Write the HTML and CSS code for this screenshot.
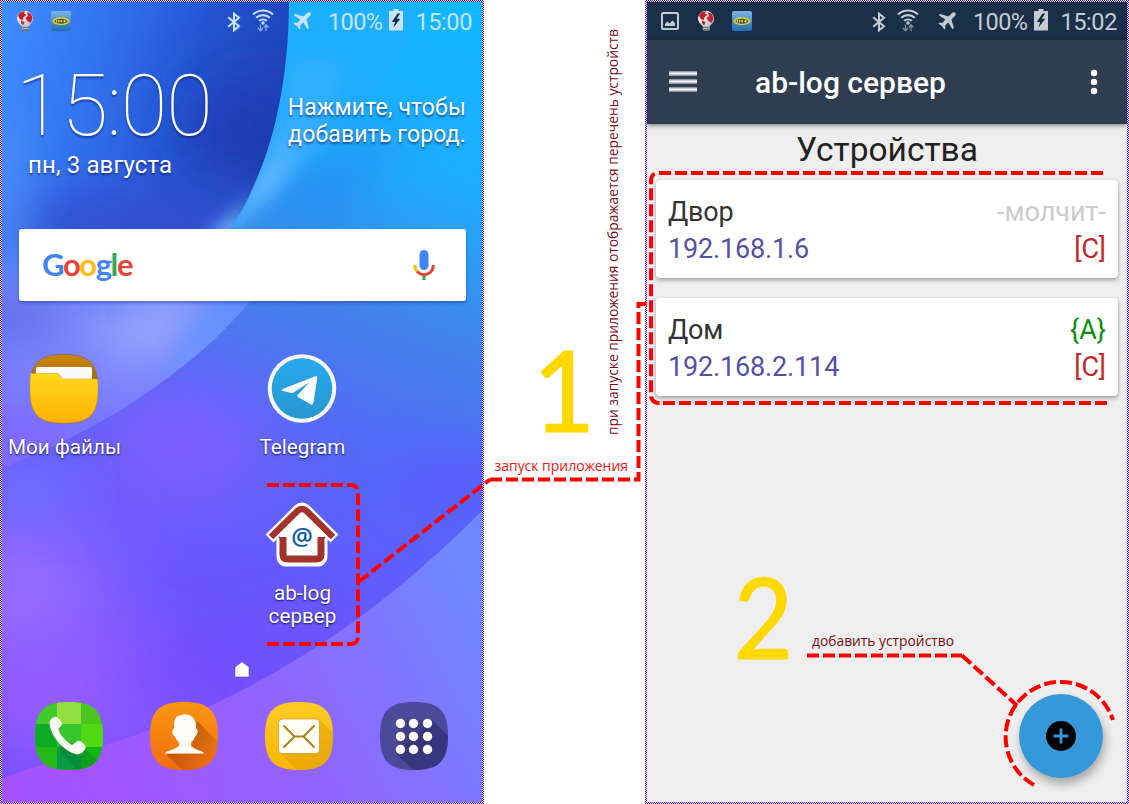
FILE: index.html
```html
<!DOCTYPE html>
<html lang="ru">
<head>
<meta charset="utf-8">
<title>ab-log сервер</title>
<link rel="stylesheet" href="styles.css">
</head>
<body>
<svg class="defs" width="0" height="0" aria-hidden="true">
  <defs>
    <pattern id="checker" width="2" height="2" patternUnits="userSpaceOnUse"><rect width="2" height="2" fill="#fff"/><path d="M0 0H1V1H0zM1 1H2V2H1z" fill="#4400f0"/></pattern>
    <pattern id="checkerOdd" width="2" height="2" patternUnits="userSpaceOnUse"><rect width="2" height="2" fill="#fff"/><path d="M1 0H2V1H1zM0 1H1V2H0z" fill="#4400f0"/></pattern>
    <linearGradient id="gBulb" x1="0" y1="0" x2="1" y2="1"><stop offset="0" stop-color="#fff"/><stop offset="1" stop-color="#b9b9c2"/></linearGradient>
    <linearGradient id="gIm" x1="0" y1="0" x2="0" y2="1"><stop offset="0" stop-color="#7db5e2"/><stop offset="1" stop-color="#1f6eb3"/></linearGradient>
    <symbol id="bulb" viewBox="0 0 18 22">
      <rect x="5.5" y="14" width="7.5" height="7" rx="1.5" fill="#70757c"/>
      <path d="M6 16.500h6.500M6 18.500h6.500" stroke="#c9ccd0" stroke-width=".8"/>
      <path d="M9 .8a8 8 0 0 1 8 8c0 3.500-2.500 5.200-4 7.200H5.500C4 14 1 12.300 1 8.800a8 8 0 0 1 8-8z" fill="url(#gBulb)"/>
      <path d="M2 5.500C3.500 2 7 1 9 1.300l-1 2.500 2.500 1-3 2.500-1 3-3-1.500zM11 2l4 2 1.500 4.500-2 4.500-3-2-2-3 2.500-2zM5 10.500l3.500 1.500-1.500 3.500L5 13z" fill="#c41f2b"/>
    </symbol>
    <symbol id="implus" viewBox="0 0 20 20">
      <rect width="20" height="20" rx="2" fill="url(#gIm)"/>
      <ellipse cx="10" cy="10.200" rx="8.300" ry="3.900" fill="#e0d534"/>
      <ellipse cx="10" cy="10.200" rx="6.300" ry="2.500" fill="#4a4c33"/>
      <path d="M5.500 9v2.500M7.500 11.500V9l1.500 1.500L10.500 9v2.500M12 10.200h3M13.500 8.800v2.800" stroke="#f2e75a" stroke-width=".9" fill="none"/>
    </symbol>
    <symbol id="bt" viewBox="0 0 14 20">
      <path d="M1.200 5.200L12 14.200 7 18.300V1.700L12 5.800 1.200 14.800" fill="none" stroke="currentColor" stroke-width="2"/>
    </symbol>
    <symbol id="wifi" viewBox="0 0 22 24">
      <g fill="none" stroke="currentColor" stroke-width="2.100"><path d="M1 6.500a14.500 14.500 0 0 1 20 0"/><path d="M4.200 9.800a10 10 0 0 1 13.600 0"/><path d="M7.300 12.900a5.500 5.500 0 0 1 7.400 0"/></g>
      <circle cx="11" cy="15" r="1.700" fill="currentColor"/>
      <path d="M8.500 16.500v6M6 20l2.500 2.800L11 20M14 23v-6M11.800 19.500L14 16.800l2.500 2.700" fill="none" stroke="currentColor" stroke-width="1.300" opacity=".6"/>
    </symbol>
    <symbol id="plane" viewBox="0 0 18 18">
      <path d="M17.300.7c-1.200-1.200-2.700-.2-3.500.5L10.500 4.500 2.200 1.900.8 3.300l6.500 4.300-3 3.300-2.600-.4L.5 11.700l3.500 2.200 2.300 3.600 1.200-1.200-.4-2.700 3.200-3 4.200 6.600 1.400-1.400-2.500-8.300 3.200-3.200c.9-.9 1.600-2.400.7-3.600z" fill="currentColor"/>
    </symbol>
    <symbol id="battery" viewBox="0 0 14 22">
      <path d="M4.500 0h5v2H14v19.500H0V2h4.500z" fill="currentColor"/>
      <path d="M8.500 4.500L2.800 13H6.200L4.300 18.800 11.300 9.800H7.700L11.200 4.500z" fill="#123043"/>
    </symbol>
  </defs>
</svg>

<main class="guide">
  <section class="phone">
    <svg class="frame" width="484" height="804" shape-rendering="crispEdges"><rect width="484" height="804" fill="url(#checker)"/></svg>
    <div class="screen home">
      <svg class="wallpaper" viewBox="2 2 480 800">
        <defs>
          <filter id="b20" x="-100%" y="-100%" width="300%" height="300%"><feGaussianBlur stdDeviation="24"/></filter>
          <filter id="b40" x="-120%" y="-120%" width="340%" height="340%"><feGaussianBlur stdDeviation="45"/></filter>
          <filter id="b8" x="-50%" y="-50%" width="200%" height="200%"><feGaussianBlur stdDeviation="9"/></filter>
          <linearGradient id="base" gradientUnits="userSpaceOnUse" x1="440" y1="0" x2="180" y2="700">
            <stop offset="0" stop-color="#10b8ff"/><stop offset=".24" stop-color="#20aafc"/><stop offset=".42" stop-color="#4283ea"/><stop offset=".62" stop-color="#5468f8"/><stop offset=".8" stop-color="#6559fd"/><stop offset="1" stop-color="#754dff"/>
          </linearGradient>
          <linearGradient id="dark" gradientUnits="userSpaceOnUse" x1="0" y1="60" x2="285" y2="130">
            <stop offset="0" stop-color="#3d8bfd"/><stop offset=".3" stop-color="#3374ef"/><stop offset=".65" stop-color="#2657d3"/><stop offset="1" stop-color="#2045b8"/>
          </linearGradient>
          <linearGradient id="low" gradientUnits="userSpaceOnUse" x1="80" y1="800" x2="470" y2="590">
            <stop offset="0" stop-color="#a553ff"/><stop offset=".45" stop-color="#9362ff"/><stop offset=".8" stop-color="#7d78ff"/><stop offset="1" stop-color="#6f88ff"/>
          </linearGradient>
          <linearGradient id="leftg" gradientUnits="userSpaceOnUse" x1="120" y1="250" x2="60" y2="470">
            <stop offset="0" stop-color="#4d83f8"/><stop offset=".35" stop-color="#7f8dfb"/><stop offset=".7" stop-color="#7b7aff"/><stop offset="1" stop-color="#7a70ff"/>
          </linearGradient>
          <linearGradient id="streak" gradientUnits="userSpaceOnUse" x1="262" y1="178" x2="300" y2="130">
            <stop offset="0" stop-color="#6dbcff" stop-opacity=".95"/><stop offset="1" stop-color="#4db4ff" stop-opacity=".35"/>
          </linearGradient>
          <linearGradient id="fade" x1="0" y1="0" x2="0" y2="1"><stop offset=".76" stop-color="#fff"/><stop offset=".97" stop-color="#000"/></linearGradient>
          <mask id="mFade" maskUnits="userSpaceOnUse" x="0" y="0" width="300" height="300"><rect width="300" height="300" fill="url(#fade)"/></mask>
          <clipPath id="cDark"><path d="M0 0H289C289 75 275 140 254 185Q243 212 229 230L200 300H0z"/></clipPath>
          <clipPath id="cLeft"><path d="M0 225H225L229 240H290C270 280 235 328 170 376Q100 430 0 469z"/></clipPath>
        </defs>
        <rect width="484" height="804" fill="url(#base)"/>
        <ellipse cx="180" cy="445" rx="90" ry="50" fill="#8b5dfa" filter="url(#b40)"/>
        <ellipse cx="10" cy="590" rx="100" ry="70" fill="#9a72ff" filter="url(#b40)"/>
        <ellipse cx="60" cy="700" rx="110" ry="50" fill="#9d60ff" filter="url(#b40)"/>
        <ellipse cx="25" cy="490" rx="50" ry="25" fill="#7072ff" filter="url(#b20)"/>
        <ellipse cx="210" cy="650" rx="110" ry="10" fill="#6f4dff" filter="url(#b20)" transform="rotate(-28 210 650)"/>
        <ellipse cx="460" cy="480" rx="65" ry="30" fill="#5f56ff" filter="url(#b20)" opacity=".7"/>
        <path d="M340 150L270 225 320 235 400 130z" fill="#2484ec" opacity=".7" filter="url(#b20)"/>
        <path d="M292 0H429C400 65 340 140 235 232H226C270 145 292 80 292 0z" fill="#2ba7ff" opacity=".35"/>
        <path d="M289 60C286 110 270 165 229 230H233L320 142 345 60z" fill="url(#streak)" filter="url(#b8)"/>
        <g clip-path="url(#cLeft)">
          <rect y="220" width="320" height="260" fill="url(#leftg)"/>
          <ellipse cx="158" cy="322" rx="60" ry="22" fill="#a3abff" filter="url(#b20)" transform="rotate(-28 158 322)"/>
          <ellipse cx="0" cy="315" rx="70" ry="22" fill="#5a66e6" filter="url(#b20)"/>
          <path d="M195 318L250 290 245 325 150 385z" fill="#6194ff" filter="url(#b8)" opacity=".7"/>
          <ellipse cx="20" cy="440" rx="60" ry="12" fill="#845aff" filter="url(#b20)"/>
          <path d="M180 240L235 220 275 170 300 240z" fill="#79c6ff" filter="url(#b8)"/>
        </g>
        <g clip-path="url(#cDark)"><g mask="url(#mFade)">
          <rect width="300" height="300" fill="url(#dark)"/>
          <ellipse cx="262" cy="120" rx="55" ry="45" fill="#1f38b0" filter="url(#b40)"/>
          <ellipse cx="235" cy="135" rx="45" ry="35" fill="#2038ae" filter="url(#b20)" opacity=".6"/>
          <ellipse cx="140" cy="225" rx="130" ry="38" fill="#3350d2" filter="url(#b20)"/>
          <ellipse cx="0" cy="190" rx="22" ry="80" fill="#518bf8" filter="url(#b20)"/>
          <path d="M205 238Q238 218 253 187L234 245z" fill="#78c7ff" filter="url(#b8)"/>
        </g></g>
        <path d="M0 779C60 757 140 738 210 706C325 652 408 585 484 509V804H0z" fill="url(#low)"/>
      </svg>

      <header class="status">
        <svg width="18" height="22"><use href="#bulb"/></svg>
        <svg class="s-im" width="20" height="20"><use href="#implus"/></svg>
        <div class="status-right">
          <svg width="14" height="20"><use href="#bt"/></svg>
          <svg class="s-wifi" width="22" height="24"><use href="#wifi"/></svg>
          <svg class="s-plane" width="18" height="18"><use href="#plane"/></svg>
          <span class="s-pct">100%</span>
          <svg class="s-bat" width="14" height="22"><use href="#battery"/></svg>
          <span class="s-time">15:00</span>
        </div>
      </header>

      <div class="widgets">
        <div class="clock">
          <div class="clock-time">15:00</div>
          <div class="clock-date">пн, 3 августа</div>
        </div>
        <p class="weather">Нажмите, чтобы<br>добавить город.</p>
      </div>

      <div class="search">
        <span class="google"><b class="gb">G</b><b class="gr">o</b><b class="gy">o</b><b class="gb">g</b><b class="gg">l</b><b class="gr">e</b></span>
        <svg width="24" height="32" viewBox="0 0 24 32">
          <rect x="7.500" y="1" width="9" height="20" rx="4.500" fill="#4285f4"/>
          <path d="M2.700 16Q2.700 20 5.400 22.700" fill="none" stroke="#fbbc05" stroke-width="3"/>
          <path d="M5.200 22.600A9.300 9.300 0 0 0 21.300 16" fill="none" stroke="#ea4335" stroke-width="3"/>
          <path d="M12 26.500V31" stroke="#34a853" stroke-width="3.200"/>
        </svg>
      </div>

      <div class="apps">
        <div class="app c1">
          <svg width="70" height="72" viewBox="0 0 70 72">
            <defs><linearGradient id="fy" x1="0" y1="0" x2="0" y2="1"><stop offset="0" stop-color="#ffd91c"/><stop offset="1" stop-color="#ffb003"/></linearGradient>
            <linearGradient id="fb" x1="0" y1="0" x2="0" y2="1"><stop offset="0" stop-color="#cf8a00"/><stop offset=".35" stop-color="#a86b00"/></linearGradient></defs>
            <path d="M35 1.500C60 1.500 69 10 69 36S60 70.500 35 70.500 1 62 1 36 10 1.500 35 1.500z" fill="url(#fb)" stroke="#7a6890" stroke-width=".8"/>
            <rect x="7" y="14" width="56" height="22" rx="2" fill="#fafafa"/>
            <path d="M1.600 20.500H28Q30 20.500 31 22.500L32.500 25Q33 26 35 26H68.600Q69 30 69 36C69 62 60 70 35 70S1 62 1 36Q1 27 1.600 20.500z" fill="url(#fy)" stroke="#cf9a2b" stroke-width=".5"/>
          </svg>
          <span>Мои файлы</span>
        </div>
        <div class="app c3">
          <svg width="70" height="72" viewBox="0 0 70 72">
            <defs><linearGradient id="tg" x1="0" y1="0" x2="0" y2="1"><stop offset="0" stop-color="#28a9ec"/><stop offset="1" stop-color="#2798d0"/></linearGradient></defs>
            <circle cx="35" cy="35.500" r="34.300" fill="#f8f9fd"/>
            <circle cx="35" cy="35.500" r="30.300" fill="url(#tg)"/>
            <path d="M49 23.100c.9-.4 1.500.2 1.400 1.200L46.500 49.500c-.3 2-1.400 2.700-3 1.800L31 44c-1-.6-.9-1.500-.2-2.200L42.500 29.200 26.500 39.500c-.8.500-1.500.6-2.400.4L16 38c-1.600-.5-1.500-1.500.2-2.300z" fill="#fafbfe"/>
          </svg>
          <span>Telegram</span>
        </div>
        <div class="app c3">
          <svg width="74" height="72" viewBox="0 0 74 72">
            <path d="M4.500 39.500L33 11Q37 7.500 41 11L69.500 39.500M17 39V57Q17 62 22 62H52Q57 62 57 57V39" fill="none" stroke="#fff" stroke-width="11"/>
            <path d="M15 36L37 12 59 36V62H15z" fill="#fff"/>
            <path d="M6 38L33 11.500Q37 8.500 41 11.500L68 38" fill="none" stroke="#a2332b" stroke-width="6.500"/>
            <path d="M18 38V55.500Q18 60 23 60H51Q56 60 56 55.500V38" fill="none" stroke="#a2332b" stroke-width="7"/>
            <text x="37" y="46" class="at">@</text>
          </svg>
          <span>ab-log<br>сервер</span>
        </div>
      </div>

      <svg class="pager" width="16" height="17" viewBox="0 0 16 17"><path d="M1 6L8 .8 15 6V16H1z" fill="#fff" stroke="#4a3d92" stroke-opacity=".5"/></svg>

      <nav class="dock">
        <svg viewBox="0 0 70 70">
          <defs>
            <clipPath id="sq"><path d="M35 1C60 1 69 10 69 35S60 69 35 69 1 60 1 35 10 1 35 1z"/></clipPath>
          </defs>
          <g clip-path="url(#sq)">
            <rect width="70" height="70" fill="#2dbb3c"/>
            <rect width="23" height="23" fill="#43c92b"/><rect x="23" width="24" height="23" fill="#91df3f"/><rect x="47" width="23" height="23" fill="#4cc51e"/>
            <rect y="23" width="23" height="23" fill="#0dab24"/><rect x="23" y="23" width="24" height="23" fill="#37c52e"/><rect x="47" y="23" width="23" height="23" fill="#52d912"/>
            <rect y="46" width="23" height="24" fill="#25ba1a"/><rect x="23" y="46" width="24" height="24" fill="#079b43"/><rect x="47" y="46" width="23" height="24" fill="#13b610"/>
            <path d="M22 35L50 47 70 66V70H44L28 54z" fill="#06722f" opacity=".35"/>
          </g>
          <path d="M22 15.500L26 19Q29 23 27 25L24.500 27.500C25 34 33 41 38 44L43.500 40Q45 39.500 47 40.500L51 44Q52 47 51 48.500 48 53 43.500 53.500C30 51 15 34 15.500 20.500Q17 16.500 22 15.500z" fill="#fbfbf6"/>
        </svg>
        <svg viewBox="0 0 70 70">
          <defs><linearGradient id="og" x1="0" y1="0" x2="0" y2="1"><stop offset="0" stop-color="#fa9711"/><stop offset="1" stop-color="#f26b12"/></linearGradient>
          <linearGradient id="sh" gradientUnits="userSpaceOnUse" x1="35" y1="35" x2="60" y2="60"><stop offset="0" stop-color="#8a3500" stop-opacity=".5"/><stop offset="1" stop-color="#8a3500" stop-opacity=".08"/></linearGradient></defs>
          <g clip-path="url(#sq)"><rect width="70" height="70" fill="url(#og)"/><path d="M48 20L70 42V70H34L17 53H55L43 45z" fill="url(#sh)"/></g>
          <path d="M35 13Q47 14 47 26V28Q49 27 48.500 31.500 48 34 46.500 35 45 39 42 41.500V45Q45 48 50 49.500 54.500 50.500 55 52.500H16Q16.500 50.500 21 49.500 26 48 30 45V41.500Q27 39 25.500 35 23.500 34 23.300 31 23.300 27.500 25 28V26Q24.500 14 33 14z" fill="#fffdf9"/>
        </svg>
        <svg viewBox="0 0 70 70">
          <defs><linearGradient id="yg" x1="0" y1="0" x2="0" y2="1"><stop offset="0" stop-color="#ffcc25"/><stop offset="1" stop-color="#fbb500"/></linearGradient></defs>
          <g clip-path="url(#sq)"><rect width="70" height="70" fill="url(#yg)"/><path d="M55 18L70 33V70H34L15 51z" fill="#cb8e00" opacity=".35"/></g>
          <rect x="14.500" y="18" width="41" height="34.500" rx="3.500" fill="#fffff6" stroke="#b98c12" stroke-width=".6"/>
          <path d="M19.500 24.500L30.500 35.500H39.500L50.500 24.500M19.500 46.500L30.500 35.500M39.500 35.500L50.500 46.500" fill="none" stroke="#a98313" stroke-width="2"/>
        </svg>
        <svg viewBox="0 0 70 70">
          <g clip-path="url(#sq)"><rect width="70" height="70" fill="#4a4a99"/><path d="M53 19L70 36V70H36L17 53z" fill="#1c1c57" opacity=".4"/><path d="M20 19H53V53H20z" fill="#33336f" opacity=".45"/></g>
          <g fill="#fff"><circle cx="21.500" cy="22.500" r="4.700"/><circle cx="34.500" cy="22.500" r="4.700"/><circle cx="48.500" cy="22.500" r="4.700"/><circle cx="21.500" cy="35.500" r="4.700"/><circle cx="34.500" cy="35.500" r="4.700"/><circle cx="48.500" cy="35.500" r="4.700"/><circle cx="21.500" cy="48.500" r="4.700"/><circle cx="34.500" cy="48.500" r="4.700"/><circle cx="48.500" cy="48.500" r="4.700"/></g>
        </svg>
      </nav>
    </div>
  </section>

  <section class="phone">
    <svg class="frame" width="484" height="804" shape-rendering="crispEdges"><rect width="484" height="804" fill="url(#checkerOdd)"/></svg>
    <div class="screen server">
      <header class="status status-dark">
        <svg class="s-img" width="18" height="18" viewBox="0 0 18 18"><rect x="1" y="1" width="16" height="16" rx="1" fill="none" stroke="currentColor" stroke-width="2"/><path d="M4 14V12L6.500 9.500 8.500 11.500 11.500 8.500 14 11V14z" fill="currentColor"/></svg>
        <svg class="s-bulb2" width="18" height="22"><use href="#bulb"/></svg>
        <svg class="s-im2" width="20" height="20"><use href="#implus"/></svg>
        <div class="status-right">
          <svg width="14" height="20"><use href="#bt"/></svg>
          <svg class="s-wifi" width="22" height="24"><use href="#wifi"/></svg>
          <svg class="s-plane" width="18" height="18"><use href="#plane"/></svg>
          <span class="s-pct">100%</span>
          <svg class="s-bat" width="14" height="22"><use href="#battery"/></svg>
          <span class="s-time">15:02</span>
        </div>
      </header>
      <div class="appbar">
        <svg width="28" height="22" viewBox="0 0 28 22"><g fill="#8f98a3"><rect y="0" width="28" height="5"/><rect y="8" width="28" height="5"/><rect y="16" width="28" height="5"/></g><g fill="#fff"><rect y="1.500" width="28" height="2"/><rect y="9.500" width="28" height="2"/><rect y="17.500" width="28" height="2"/></g></svg>
        <h1>ab-log сервер</h1>
        <svg width="8" height="26" viewBox="0 0 8 26"><g fill="#fff"><circle cx="4" cy="4" r="3.200"/><circle cx="4" cy="13" r="3.200"/><circle cx="4" cy="22" r="3.200"/></g></svg>
      </div>
      <h2>Устройства</h2>
      <div class="cards">
        <article class="card">
          <div class="row"><span class="name">Двор</span><span class="silent">-молчит-</span></div>
          <div class="row"><span class="ip">192.168.1.6</span><span class="flag-c">[C]</span></div>
        </article>
        <article class="card">
          <div class="row"><span class="name">Дом</span><span class="flag-a">{A}</span></div>
          <div class="row"><span class="ip">192.168.2.114</span><span class="flag-c">[C]</span></div>
        </article>
      </div>
      <button class="fab" aria-label="+">
        <svg width="30" height="30" viewBox="0 0 30 30"><circle cx="15" cy="15" r="15" fill="#000"/><path d="M15 7.500V22.500M7.500 15H22.500" stroke="#3498db" stroke-width="2.800"/></svg>
      </button>
    </div>
  </section>

  <svg class="notes" viewBox="0 0 1129 804">
    <g class="dash">
      <path d="M267 485H350Q358 485 358 493V636Q358 644 350 644"/>
      <path d="M267 644H350"/>
      <path d="M359 581.500L490 479.500"/>
      <path d="M490 479.500H638.500V304H648"/>
      <path d="M1103 173H659Q651 173 651 181V395Q651 403 660 403"/>
      <path d="M1107 403H660"/>
      <path d="M807 655.500H962"/>
      <path d="M962 655.500L1017 705.500"/>
      <path d="M1034 785A55 55 0 1 1 1113 720"/>
    </g>
    <text class="num" transform="translate(532.500 432) scale(.97 1)">1</text>
    <text class="num" transform="translate(733.500 659) scale(.92 1)">2</text>
    <text class="note red" x="494.500" y="471" textLength="133.500" lengthAdjust="spacingAndGlyphs">запуск приложения</text>
    <text class="note" x="812" y="646" textLength="142" lengthAdjust="spacingAndGlyphs">добавить устройство</text>
    <text class="note" transform="translate(618 435) rotate(-90)" textLength="406" lengthAdjust="spacingAndGlyphs">при запуске приложения отображается перечень устройств</text>
  </svg>
</main>
</body>
</html>
```
FILE: styles.css
```css
* { box-sizing: border-box; }
body { margin: 0; background: #fff; font-family: Roboto, "Noto Sans", sans-serif; }
.defs { display: block; position: absolute; }
svg { display: block; flex: none; }

.guide { position: relative; display: flex; justify-content: space-between; width: 1129px; height: 804px; overflow: hidden; }
.phone { position: relative; width: 484px; height: 804px; padding: 2px; }
.frame { position: absolute; inset: 0; }
.screen { position: relative; width: 480px; height: 800px; overflow: hidden; display: flex; flex-direction: column; }
.wallpaper { position: absolute; inset: 0; width: 480px; height: 800px; }
.home > :not(.wallpaper) { position: relative; }

.status { display: flex; align-items: flex-start; height: 38px; padding: 8px 10px 0 14px; color: #c5e4fb; font-weight: 400; font-size: 23.500px; line-height: 28px; flex: none; }
.status-right { margin-left: auto; display: flex; align-items: flex-start; }
.status-right > svg { margin-top: 2px; }
.s-im { margin: 1px 0 0 17px; }
.status-right .s-wifi { margin: -2px 0 0 11px; }
.status-right .s-plane { margin: 2px 0 0 19px; }
.s-pct { width: 54px; margin: -2px 7px 0 17px; letter-spacing: -.6px; white-space: nowrap; }
.status-right .s-bat { margin-top: -1px; }
.s-time { width: 58px; margin: -2px 0 0 11px; text-align: right; letter-spacing: -.4px; }
.status-dark { background: #1a3048; color: #c6cbd2; }
.s-img { margin-top: 2px; }
.s-bulb2 { margin-left: 18px; }
.s-im2 { margin: 1px 0 0 17px; }

.widgets { display: flex; justify-content: space-between; height: 189px; padding: 0 16px 0 14px; color: #fff; flex: none; text-shadow: 0 1.500px 2px rgba(10, 20, 90, .55); }
.clock-time { margin-top: 29px; font-weight: 100; font-size: 85px; line-height: 74px; letter-spacing: -1.100px; }
.clock-date { margin: 8px 0 0 12px; font-size: 24px; line-height: 28px; letter-spacing: .1px; }
.weather { margin: 54px 0 0; font-size: 23px; line-height: 27px; text-align: right; letter-spacing: .15px; }

.search { display: flex; align-items: center; justify-content: space-between; margin: 0 16px 0 17px; padding: 0 30px 0 23px; height: 72px; background: #fff; border-radius: 3px; box-shadow: 0 2px 3px rgba(20, 30, 100, .35); flex: none; }
.google { margin-top: -3px; font: 31px/38px Lato, sans-serif; letter-spacing: -1.400px; }
.google b { font-weight: 700; }
.gb { color: #4285f4; } .gr { color: #ea4335; } .gy { color: #fbbc05; } .gg { color: #34a853; }

.apps { display: grid; grid-template-columns: repeat(4, 119px); grid-auto-rows: 146px; padding: 52px 0 0 3px; height: 355px; flex: none; }
.app { display: flex; flex-direction: column; align-items: center; color: #fff; font-size: 20.700px; line-height: 23px; text-align: center; text-shadow: 0 1px 2px rgba(10, 10, 60, .9); }
.app span { margin-top: 11px; white-space: nowrap; }
.app svg { margin-left: -1px; }
.c1 { grid-column: 1; }
.c3 { grid-column: 3; }
.at { font: 24px "Open Sans", sans-serif; font-weight: 600; fill: #0b5ca8; text-anchor: middle; text-shadow: none; }
.pager { margin: 5px 0 0 232px; }
.dock { display: grid; grid-template-columns: repeat(4, 115px); justify-items: center; padding: 23px 0 0 9.500px; }
.dock svg { width: 70px; height: 70px; }

.server { background: #eee; }
.appbar { display: flex; align-items: center; height: 84px; padding: 0 29px 0 22px; background: #2e3d50; box-shadow: 0 1px 5px rgba(0, 0, 0, .55); flex: none; color: #fff; }
.appbar h1 { margin: 2px auto 0 58px; font-weight: 500; font-size: 30px; line-height: 36px; }
.server h2 { margin: 6px 0 0; font-weight: 400; font-size: 33.500px; line-height: 40px; text-align: center; color: #222; letter-spacing: 0; }
.cards { display: flex; flex-direction: column; gap: 20px; padding: 10px 9px 0 9px; }
.card { height: 98px; padding: 14px 12px 0 12px; background: #fff; border-radius: 4px; box-shadow: 0 2px 4px rgba(0, 0, 0, .35); }
.row { display: flex; justify-content: space-between; font-size: 27px; line-height: 37px; }
.name { color: #333; letter-spacing: -.2px; }
.silent { color: #ccc; }
.ip { color: #5450a4; letter-spacing: -.15px; }
.flag-c { color: #c62828; }
.flag-a { color: #0b8f0b; }
.fab { position: absolute; right: 24px; bottom: 24px; width: 84px; height: 84px; border: 0; border-radius: 50%; background: #3498db; box-shadow: 2px 6px 10px rgba(0, 0, 0, .3); display: grid; place-items: center; padding: 0; }

.notes { position: absolute; inset: 0; width: 1129px; height: 804px; }
.dash path { fill: none; stroke: #f00; stroke-width: 4; stroke-dasharray: 12 4; }
.num { font: 112px Lato, sans-serif; fill: #ffd800; stroke: #ffd800; stroke-width: 1.200; stroke-linejoin: round; }
.note { font: 14.500px "Open Sans", sans-serif; fill: #7b0b12; }
.note.red { fill: #f01010; }
```
